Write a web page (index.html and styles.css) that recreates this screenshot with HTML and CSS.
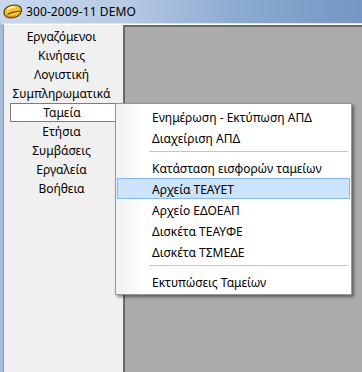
FILE: index.html
```html
<!DOCTYPE html>
<html lang="el">
<head>
    <meta charset="UTF-8">
    <title>300-2009-11 DEMO</title>
    <link rel="stylesheet" href="styles.css">
</head>
<body>
    <div class="window">
        <div class="titlebar">
            <svg class="app-icon" width="20" height="15" viewBox="0 0 20 15">
                <path d="M1 8.5 C1 4 6 1 11.5 1 C16.5 1 19 3.5 18.5 7 C18 11 13 14 7.5 14 C3.5 14 1 11.5 1 8.5 Z" fill="#f4c431" stroke="#5a3c0a" stroke-width="1.2"/>
                <path d="M4 6 C6 3.5 9 2.8 12 3" fill="none" stroke="#fff4c0" stroke-width="1.4"/>
                <path d="M4.5 10.5 C8 8.5 12 7.5 17.5 7.2" fill="none" stroke="#6e4710" stroke-width="1.2"/>
                <path d="M3 11 C5 13 9 13 13 11.8" fill="none" stroke="#c9870d" stroke-width="1"/>
            </svg>
            <span class="title">300-2009-11 DEMO</span>
        </div>
        <div class="client">
            <div class="sidebar">
                <div class="nav-item">Εργαζόμενοι</div>
                <div class="nav-item">Κινήσεις</div>
                <div class="nav-item">Λογιστική</div>
                <div class="nav-item">Συμπληρωματικά</div>
                <div class="nav-item active">Ταμεία</div>
                <div class="nav-item">Ετήσια</div>
                <div class="nav-item">Συμβάσεις</div>
                <div class="nav-item">Εργαλεία</div>
                <div class="nav-item">Βοήθεια</div>
            </div>
            <div class="mdi"></div>
        </div>

        <div class="popup">
            <div class="menu-item">Ενημέρωση - Εκτύπωση ΑΠΔ</div>
            <div class="menu-item">Διαχείριση ΑΠΔ</div>
            <div class="menu-sep"></div>
            <div class="menu-item">Κατάσταση εισφορών ταμείων</div>
            <div class="menu-item hover">Αρχεία ΤΕΑΥΕΤ</div>
            <div class="menu-item">Αρχείο ΕΔΟΕΑΠ</div>
            <div class="menu-item">Δισκέτα ΤΕΑΥΦΕ</div>
            <div class="menu-item">Δισκέτα ΤΣΜΕΔΕ</div>
            <div class="menu-sep"></div>
            <div class="menu-item">Εκτυπώσεις Ταμείων</div>
        </div>
    </div>
</body>
</html>
```

FILE: styles.css
```css
body {
    margin: 0;
    font-family: "Noto Sans", "Open Sans", sans-serif;
    font-size: 12px;
    color: #000;
}
.window {
    position: relative;
    width: 362px;
    height: 372px;
    overflow: hidden;
    display: flex;
    flex-direction: column;
}
.titlebar {
    height: 23px;
    display: flex;
    align-items: center;
    padding-left: 3px;
    background: linear-gradient(to right, #c9d8ec 0%, #b6cae4 35%, #8dabd1 65%, #7e9fc9 85%, #7797c2 100%);
    box-sizing: border-box;
}
.app-icon {
    margin-right: 3px;
    margin-top: -1px;
}
.title {
    font-size: 12px;
    letter-spacing: 0.1px;
}
.client {
    flex: 1;
    display: flex;
    border-left: 3px solid #a6bcd9;
    border-top: 1px solid #dbe5f1;
}
.sidebar {
    width: 120px;
    background: #f0f0f0;
    border-left: 1px solid #8e9aa8;
    border-top: 1px solid #ffffff;
    padding-top: 2px;
    box-sizing: border-box;
}
.nav-item {
    height: 19px;
    line-height: 19px;
    text-align: center;
    margin: 0 8px 0 6px;
    padding-right: 2px;
}
.nav-item.active {
    background: #fff;
    outline: 1px solid #7c7c7c;
    outline-offset: -1px;
    margin-right: 7px;
}
.mdi {
    flex: 1;
    background: #ababab;
    border-left: 2px solid #6a6a6a;
    border-top: 2px solid #6a6a6a;
    margin-top: 1px;
}
.popup {
    position: absolute;
    left: 115px;
    top: 103px;
    width: 237px;
    padding: 2px 1px;
    background: linear-gradient(to right, #f1f1f1 0px, #fbfbfb 22px, #ffffff 26px);
    border: 1px solid #979797;
    box-shadow: 2px 2px 3px rgba(0, 0, 0, 0.45);
    box-sizing: border-box;
}
.menu-item {
    height: 21px;
    line-height: 21px;
    padding-left: 34px;
    border: 1px solid transparent;
    box-sizing: border-box;
    white-space: nowrap;
}
.menu-item.hover {
    background: #cce4fb;
    border-color: #86b7ec;
}
.menu-sep {
    height: 1px;
    background: #c5c5c5;
    border-bottom: 1px solid #ffffff;
    margin: 3px 2px 4px 32px;
}
```
